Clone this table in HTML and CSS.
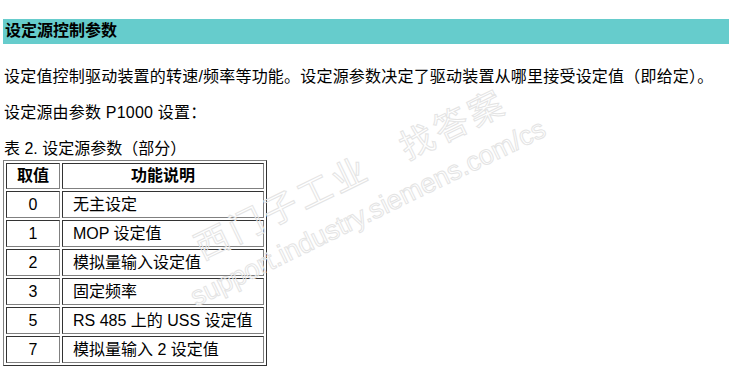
FILE: index.html
```html
<!DOCTYPE html>
<html lang="zh-CN">
<head>
    <meta charset="UTF-8">
    <meta name="viewport" content="width=device-width, initial-scale=1.0">
    <title>设定源控制参数</title>
    <link rel="stylesheet" href="styles.css">
</head>
<body>
    <h2 class="section-title">设定源控制参数</h2>
    <p class="text">设定值控制驱动装置的转速/频率等功能。设定源参数决定了驱动装置从哪里接受设定值（即给定）。</p>
    <p class="text">设定源由参数 P1000 设置：</p>

    <table class="param-table">
        <caption>表 2. 设定源参数（部分）</caption>
        <tr>
            <th class="col-value">取值</th>
            <th class="col-desc">功能说明</th>
        </tr>
        <tr>
            <td class="col-value">0</td>
            <td class="col-desc">无主设定</td>
        </tr>
        <tr>
            <td class="col-value">1</td>
            <td class="col-desc">MOP 设定值</td>
        </tr>
        <tr>
            <td class="col-value">2</td>
            <td class="col-desc">模拟量输入设定值</td>
        </tr>
        <tr>
            <td class="col-value">3</td>
            <td class="col-desc">固定频率</td>
        </tr>
        <tr>
            <td class="col-value">5</td>
            <td class="col-desc">RS 485 上的 USS 设定值</td>
        </tr>
        <tr>
            <td class="col-value">7</td>
            <td class="col-desc">模拟量输入 2 设定值</td>
        </tr>
    </table>

    <!-- site watermark laid over the content -->
    <div class="watermark">
        <div class="watermark-cn">西门子工业　找答案</div>
        <div class="watermark-url">support.industry.siemens.com/cs</div>
    </div>
</body>
</html>
```

FILE: styles.css
```css
body {
    font-family: "Liberation Sans", Arial, "Noto Sans CJK SC", sans-serif;
    font-size: 16px;
    color: #000;
    background-color: #fff;
    margin: 0;
    padding: 19px 0 0 3px;
    position: relative;
    overflow: hidden;
}

.section-title {
    margin: 0;
    padding: 0 0 0 2px;
    height: 25px;
    line-height: 23px;
    font-size: 16px;
    font-weight: bold;
    background-color: #66cccc;
}

.text {
    margin: 23px 0 0 1px;
    line-height: 20px;
    letter-spacing: 0.2px;
}

.text + .text {
    margin-top: 16px;
}

.param-table {
    margin-top: 16px;
    border-collapse: separate;
    border-spacing: 2px;
    border: 1px solid;
    border-color: #808080 #333 #333 #808080;
}

.param-table caption {
    text-align: left;
    line-height: 20px;
    padding: 0 0 1px 1px;
}

.param-table th,
.param-table td {
    border: 1px solid;
    border-color: #333 #808080 #808080 #333;
    padding: 0;
    line-height: 25px;
}

.param-table th {
    line-height: 24px;
    font-weight: bold;
}

.col-value {
    width: 52px;
    text-align: center;
}

.col-desc {
    width: 180px;
    padding: 0 10px !important;
    text-align: left;
}

th.col-desc {
    text-align: center;
}

.watermark {
    position: absolute;
    left: 164px;
    top: 241px;
    transform: rotate(-26deg);
    transform-origin: left top;
    color: transparent;
    -webkit-text-stroke: 1px #e4e4e4;
    pointer-events: none;
    white-space: nowrap;
}

.watermark-cn {
    font-family: "Noto Sans CJK SC", sans-serif;
    font-size: 34px;
    line-height: 40px;
    letter-spacing: 4px;
    padding-left: 26px;
}

.watermark-url {
    font-family: "Liberation Sans", Arial, sans-serif;
    font-size: 27px;
    line-height: 30px;
    margin-top: 9px;
}
```
